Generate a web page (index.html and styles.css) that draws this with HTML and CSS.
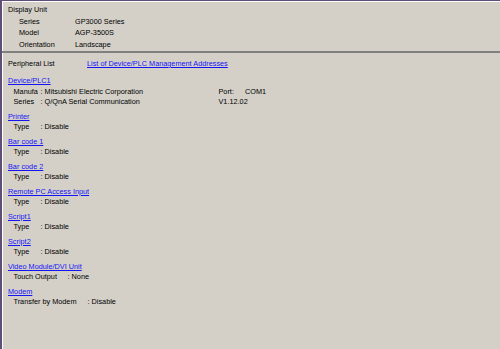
FILE: index.html
```html
<!DOCTYPE html>
<html lang="en">
<head>
  <meta charset="UTF-8">
  <title>Display Unit</title>
  <link rel="stylesheet" href="styles.css">
</head>
<body>
  <div class="window">
    <div class="unit">
      <div class="title">Display Unit</div>
      <div class="prop"><span class="prop-key">Series</span><span>GP3000 Series</span></div>
      <div class="prop"><span class="prop-key">Model</span><span>AGP-3500S</span></div>
      <div class="prop"><span class="prop-key">Orientation</span><span>Landscape</span></div>
    </div>

    <div class="peripheral">
      <div class="list-head">
        <span class="list-label">Peripheral List</span>
        <a href="#">List of Device/PLC Management Addresses</a>
      </div>

      <div class="group">
        <a href="#" class="group-title">Device/PLC1</a>
        <div class="row">
          <span class="key">Manufa</span>
          <span class="val wide">: Mitsubishi Electric Corporation</span>
          <span class="port">Port:</span>
          <span>COM1</span>
        </div>
        <div class="row">
          <span class="key">Series</span>
          <span class="val wide">: Q/QnA Serial Communication</span>
          <span>V1.12.02</span>
        </div>
      </div>

      <div class="group">
        <a href="#" class="group-title">Printer</a>
        <div class="row"><span class="key">Type</span><span class="val">: Disable</span></div>
      </div>

      <div class="group">
        <a href="#" class="group-title">Bar code 1</a>
        <div class="row"><span class="key">Type</span><span class="val">: Disable</span></div>
      </div>

      <div class="group">
        <a href="#" class="group-title">Bar code 2</a>
        <div class="row"><span class="key">Type</span><span class="val">: Disable</span></div>
      </div>

      <div class="group">
        <a href="#" class="group-title">Remote PC Access Input</a>
        <div class="row"><span class="key">Type</span><span class="val">: Disable</span></div>
      </div>

      <div class="group">
        <a href="#" class="group-title">Script1</a>
        <div class="row"><span class="key">Type</span><span class="val">: Disable</span></div>
      </div>

      <div class="group">
        <a href="#" class="group-title">Script2</a>
        <div class="row"><span class="key">Type</span><span class="val">: Disable</span></div>
      </div>

      <div class="group">
        <a href="#" class="group-title">Video Module/DVI Unit</a>
        <div class="row"><span class="key key-touch">Touch Output</span><span class="val">: None</span></div>
      </div>

      <div class="group">
        <a href="#" class="group-title">Modem</a>
        <div class="row"><span class="key key-modem">Transfer by Modem</span><span class="val">: Disable</span></div>
      </div>
    </div>
  </div>
</body>
</html>
```

FILE: styles.css
```css
* {
  box-sizing: border-box;
}

body {
  margin: 0;
  background: #d4d0c8;
  font-family: "Liberation Sans", Arial, sans-serif;
  font-size: 7.3px;
  color: #000;
}

a {
  color: #1414f5;
  text-decoration: underline;
}

.window {
  min-height: 100vh;
  border-top: 1px solid #5f4f78;
  border-left: 2px solid #5f4f78;
  box-shadow: inset 1px 1px 0 #ffffff;
}

.unit {
  padding: 3px 0 1px 6px;
  line-height: 11.5px;
}

.prop {
  display: flex;
  padding-left: 11px;
}

.prop-key {
  width: 56px;
}

.peripheral {
  border-top: 2px solid #808080;
  padding: 6px 0 0 6px;
  line-height: 10.5px;
}

.list-head {
  display: flex;
  margin-bottom: 6.5px;
}

.list-label {
  width: 79px;
}

.group {
  margin-bottom: 4px;
}

.group-title {
  display: inline-block;
}

.row {
  display: flex;
  padding-left: 5.5px;
  white-space: nowrap;
}

.key {
  width: 27px;
}

.key-touch {
  width: 54px;
}

.key-modem {
  width: 74px;
}

.val.wide {
  width: 178px;
}

.port {
  width: 26.5px;
}
```
